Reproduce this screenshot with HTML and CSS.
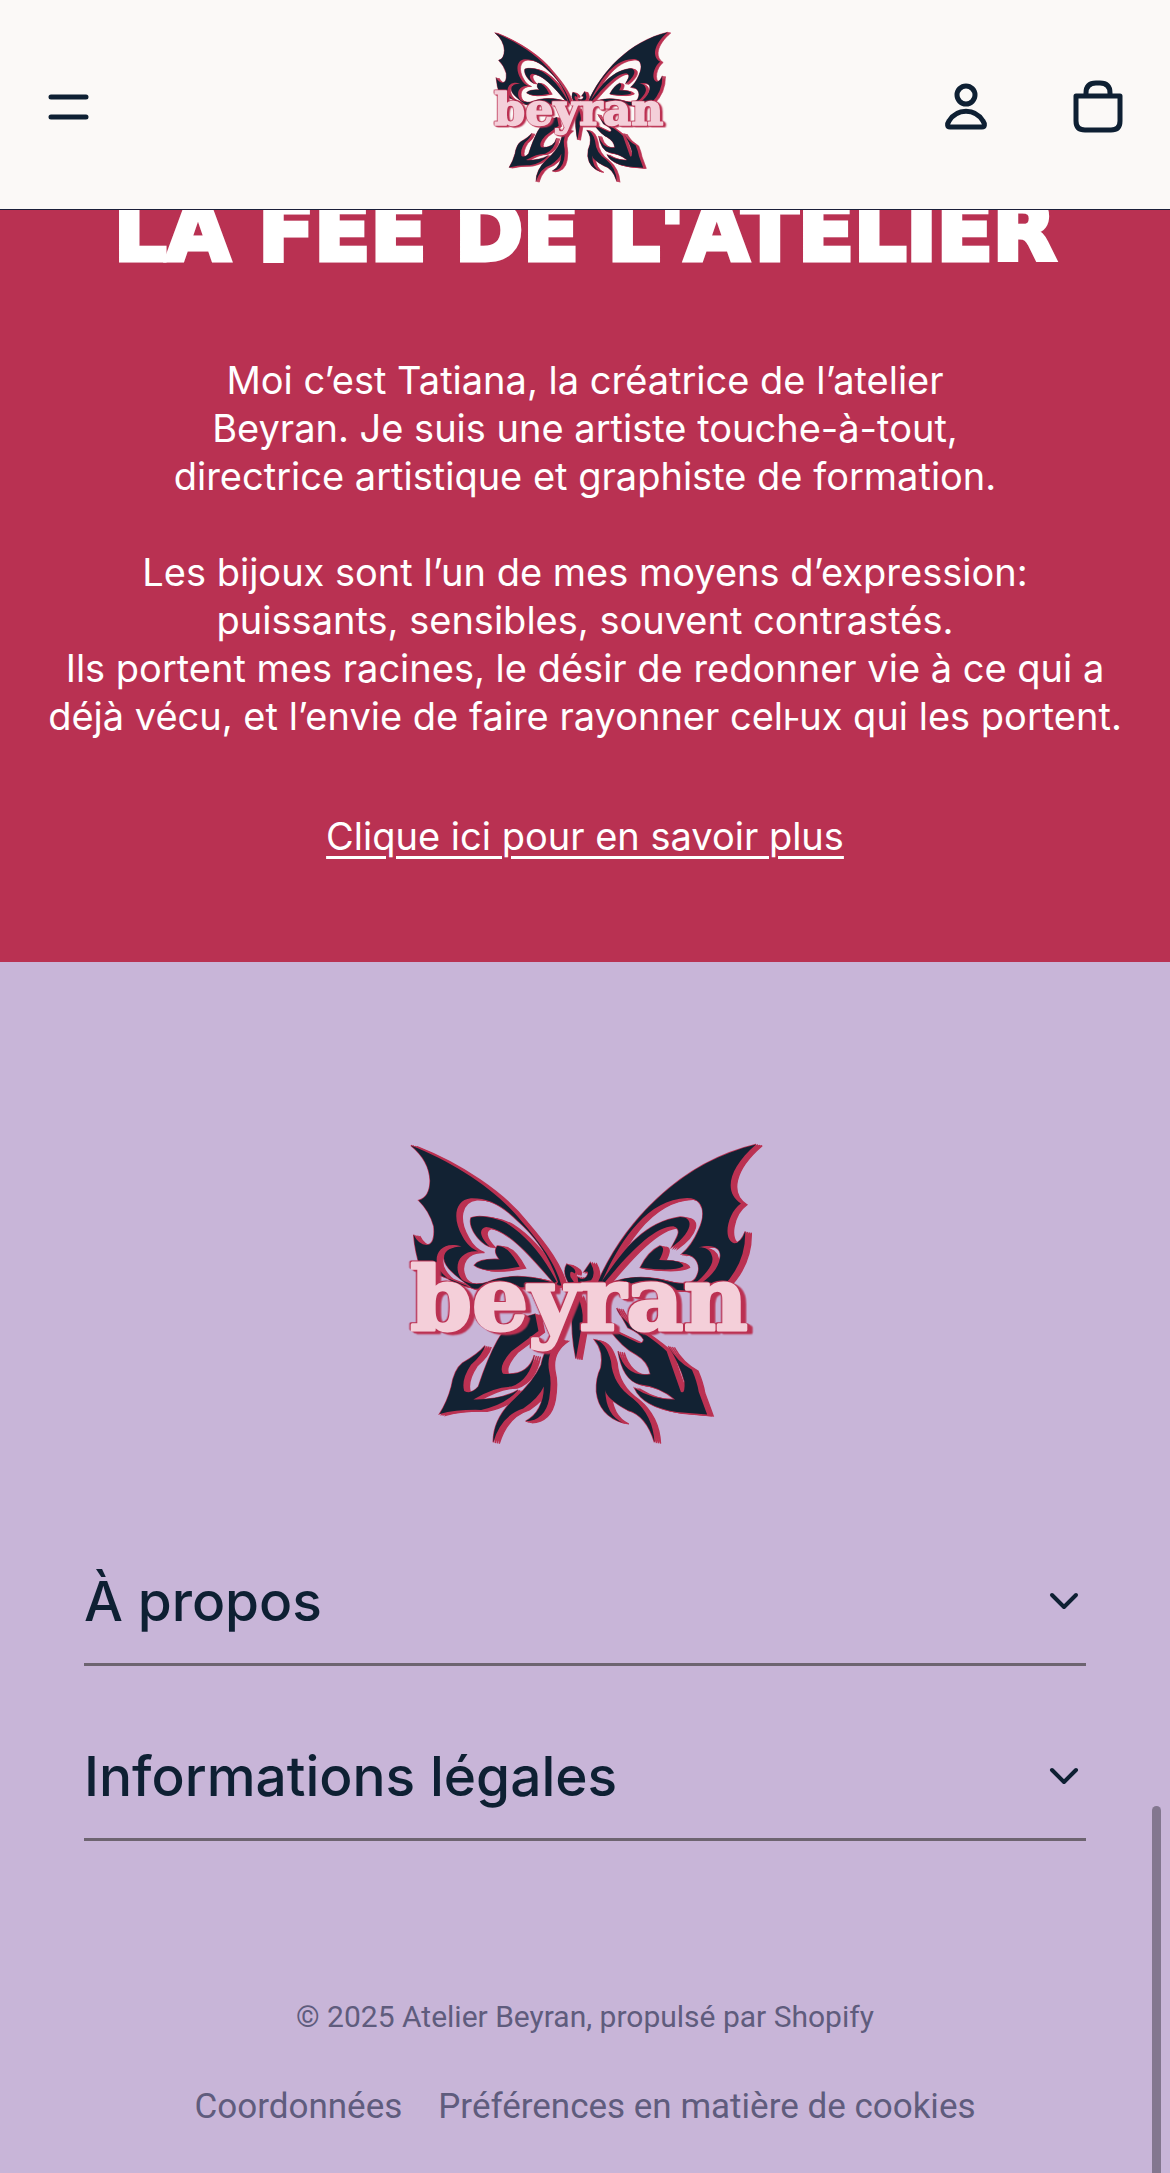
FILE: index.html
```html
<!DOCTYPE html>
<html lang="fr">
<head>
  <meta charset="UTF-8">
  <meta name="viewport" content="width=device-width, initial-scale=1.0">
  <title>Atelier Beyran</title>
  <link rel="stylesheet" href="styles.css">
</head>
<body>
  <!-- Butterfly shape, shared by header and footer logos -->
  <svg class="sprite" aria-hidden="true">
    <defs>
      <g id="butterfly" fill-rule="evenodd">
        <!-- upper wings -->
        <path d="M62 50C190 100 320 185 390 275C450 345 490 400 508 465L420 470L250 475L90 412Q75 370 70 315Q85 345 108 345Q135 345 130 290Q118 245 85 213Q118 205 119 155Q117 95 62 50ZM498 455C470 370 420 310 380 275C330 225 290 206 240 207C190 212 185 270 215 320C228 345 245 358 262 364C210 360 190 400 205 435C215 462 260 466 290 455C350 430 430 435 494 462ZM212 350C150 330 125 380 145 415C165 450 205 465 240 470C200 440 162 412 160 385C160 358 185 352 212 350Z"/>
        <path d="M1085 47C1000 120 990 190 1040 222C1000 250 985 330 1020 340Q1040 340 1053 305Q1055 400 985 470L880 480L612 465C690 280 860 100 1085 47ZM625 460C670 360 750 210 880 206C935 205 935 260 915 300C900 335 885 355 865 372C910 370 925 410 908 440C895 468 850 462 800 447C740 435 690 440 635 465ZM915 352C960 340 985 355 978 385C970 430 920 465 880 480C930 440 962 405 955 380C950 358 935 352 915 352Z"/>
        <path d="M494 454C450 370 400 315 345 280C310 262 260 255 240 265C232 290 260 335 295 350C265 320 262 298 285 292C350 300 410 370 486 458Z"/>
        <path d="M620 464C680 380 740 280 860 262C905 262 895 310 835 352C848 325 870 300 840 290C780 290 700 380 630 464Z"/>
        <path d="M318 348Q350 345 384 410Q280 430 250 405Q265 385 325 388Q305 365 318 348Z"/>
        <path d="M800 348Q820 350 798 390Q865 390 870 408Q840 425 742 412Q765 365 800 348Z"/>
        <!-- antennae and body -->
        <path d="M524 402Q555 415 548 430Q530 415 535 440L545 455L530 458Q510 425 524 402ZM594 397Q612 430 596 450Q575 450 560 468L556 440Q570 452 582 440Q595 420 575 425Z"/>
        <path d="M556 495Q574 540 571 570L551 682Q536 610 540 530Z"/>
        <!-- lower wings -->
        <path d="M430 550Q350 570 318 630Q290 680 262 765Q240 790 220 778Q210 745 240 700Q275 670 282 644Q260 670 215 695Q190 715 182 765Q170 810 147 846Q200 832 270 834Q340 820 380 775Q330 805 247 803Q310 765 360 765Q415 745 428 672Q410 735 335 727Q320 705 360 660L440 600Z"/>
        <path d="M510 627Q465 625 448 700Q425 750 370 800Q305 860 306 930Q330 850 395 830Q440 800 456 765Q455 840 402 868Q460 865 472 800Q480 750 472 720Q460 660 510 627Z"/>
        <path d="M672 532Q685 570 750 605Q800 640 820 660L862 780Q875 790 873 750Q860 700 825 645Q850 690 895 715Q910 750 915 780Q930 820 940 848L850 840Q750 825 725 770Q780 805 845 803Q800 765 740 758Q690 745 676 660Q700 740 772 728Q765 690 730 670Q690 650 650 595L735 635Q750 640 752 625Q740 605 705 590Z"/>
        <path d="M606 626Q640 630 655 690Q660 760 720 800Q780 850 784 930Q760 850 705 835Q640 800 638 775Q640 850 690 872Q620 850 612 780Q610 740 625 710Q635 660 606 626Z"/>
      </g>
      <!-- the same shape pushed out to the right for the red relief -->
      <g id="relief">
        <use href="#butterfly"/>
        <use href="#butterfly" x="6" y="2"/>
        <use href="#butterfly" x="12" y="3"/>
        <use href="#butterfly" x="18" y="4"/>
      </g>
    </defs>
  </svg>

  <header class="header">
    <button class="icon-btn" aria-label="Menu">
      <svg width="48" height="42" viewBox="0 0 48 42"><path d="M7 11H42M7 31H42"/></svg>
    </button>
    <a class="header-logo" href="#" aria-label="Atelier Beyran">
      <svg class="logo" viewBox="46 34 1064 910">
        <use class="logo-relief" href="#relief"/>
        <use class="logo-wings" href="#butterfly"/>
        <text class="logo-text" x="60" y="598">beyran</text>
      </svg>
    </a>
    <div class="header-actions">
      <a class="icon-btn" href="#" aria-label="Connexion">
        <svg width="48" height="56" viewBox="0 0 48 56"><circle cx="24" cy="16" r="9"/><path d="M8 48C5 48 5 45 7 42C15 29 33 29 41 42C43 45 43 48 40 48Z"/></svg>
      </a>
      <a class="icon-btn" href="#" aria-label="Panier">
        <svg width="56" height="56" viewBox="0 0 56 56"><path d="M6 17H50V42Q50 51 41 51H15Q6 51 6 42ZM16 17V14Q16 4 26 4H30Q40 4 40 14V17"/></svg>
      </a>
    </div>
  </header>

  <main class="about">
    <h2>LA FEE DE L'ATELIER</h2>
    <p>
      Moi c’est Tatiana, la créatrice de l’atelier<br>
      Beyran. Je suis une artiste touche-à-tout,<br>
      directrice artistique et graphiste de formation.
    </p>
    <p>
      Les bijoux sont l’un de mes moyens d’expression:<br>
      puissants, sensibles, souvent contrastés.<br>
      Ils portent mes racines, le désir de redonner vie à ce qui a<br>
      déjà vécu, et l’envie de faire rayonner celⱶux qui les portent.
    </p>
    <a class="about-link" href="#">Clique ici pour en savoir plus</a>
  </main>

  <footer class="footer">
    <svg class="logo" viewBox="46 34 1064 910" role="img" aria-label="Beyran">
      <use class="logo-relief" href="#relief"/>
      <use class="logo-wings" href="#butterfly"/>
      <text class="logo-text" x="60" y="598">beyran</text>
    </svg>

    <div class="menus">
      <button class="menu-toggle" aria-expanded="false">
        <span>À propos</span>
        <svg width="32" height="24" viewBox="0 0 32 24"><path d="M4 6L16 18L28 6"/></svg>
      </button>
      <button class="menu-toggle" aria-expanded="false">
        <span>Informations légales</span>
        <svg width="32" height="24" viewBox="0 0 32 24"><path d="M4 6L16 18L28 6"/></svg>
      </button>
    </div>

    <p class="copyright">© 2025 Atelier Beyran, propulsé par Shopify</p>
    <nav class="policies">
      <a href="#">Coordonnées</a>
      <a href="#">Préférences en matière de cookies</a>
    </nav>
  </footer>

  <div class="scroll-thumb"></div>
</body>
</html>
```
FILE: styles.css
```css
* {
  margin: 0;
  padding: 0;
  box-sizing: border-box;
}

body {
  font-family: Inter, "Liberation Sans", sans-serif;
  background: #c8b5d8;
  color: #0e2033;
}

a {
  color: inherit;
  text-decoration: none;
}

button {
  font: inherit;
  color: inherit;
  background: none;
  border: none;
  cursor: pointer;
}

.sprite {
  position: absolute;
  width: 0;
  height: 0;
}

/* Header */
.header {
  position: sticky;
  top: 0;
  z-index: 10;
  display: grid;
  grid-template-columns: 1fr auto 1fr;
  align-items: center;
  height: 210px;
  padding: 5px 44px 0;
  background: #fbf9f7;
  border-bottom: 1px solid #1b1f3a;
}

.header-logo {
  margin-right: 6px;
}

.header-logo .logo {
  width: 180px;
  height: 154px;
}

.header-actions {
  display: flex;
  justify-content: flex-end;
  gap: 80px;
}

.icon-btn {
  display: flex;
  align-items: center;
}

.icon-btn svg {
  fill: none;
  stroke: #0e2033;
  stroke-width: 5;
  stroke-linejoin: round;
  stroke-linecap: round;
}

/* Logo */
.logo {
  display: block;
  width: 360px;
  height: 307px;
}

.logo-relief {
  fill: #bb3152;
  stroke: #bb3152;
  stroke-width: 4;
}

.logo-wings {
  fill: #122233;
}

.logo-text {
  font-family: "DejaVu Serif", serif;
  font-size: 262px;
  font-weight: 700;
  fill: #f4cfd9;
  stroke: #f4cfd9;
  stroke-width: 9;
  stroke-linejoin: round;
  filter: drop-shadow(-4px -3px 0 #bb3152) drop-shadow(8px 4px 0 #bb3152) drop-shadow(8px 4px 0 #bb3152);
}

/* About */
.about {
  display: flex;
  flex-direction: column;
  align-items: center;
  padding: 0 40px 102px;
  background: #b93152;
  color: #fff;
  font-size: 38px;
  line-height: 48px;
  text-align: center;
}

.about h2 {
  margin: -26px 0 76px;
  font-family: "DejaVu Sans", sans-serif;
  font-size: 82px;
  font-weight: 700;
  line-height: 96px;
  white-space: nowrap;
  -webkit-text-stroke: 5px #fff;
}

.about p {
  margin-bottom: 48px;
  white-space: nowrap;
}

.about-link {
  margin-top: 24px;
  text-decoration: underline;
  text-decoration-thickness: 3px;
  text-underline-offset: 6px;
}

/* Footer */
.footer {
  display: flex;
  flex-direction: column;
  align-items: center;
  padding: 178px 84px 40px;
}

.menus {
  align-self: stretch;
  margin: 44px 0 152px;
}

.menu-toggle {
  display: flex;
  align-items: center;
  justify-content: space-between;
  width: 100%;
  height: 175px;
  padding-top: 48px;
  border-bottom: 3px solid #6d6470;
  font-size: 55px;
  font-weight: 500;
}

.menu-toggle svg {
  margin-right: 6px;
  fill: none;
  stroke: #0e2033;
  stroke-width: 4;
  stroke-linecap: round;
  stroke-linejoin: round;
}

.copyright,
.policies {
  color: #5f5c7d;
  font-family: Roboto, sans-serif;
  line-height: 48px;
}

.copyright {
  font-size: 30px;
}

.policies {
  display: flex;
  gap: 36px;
  margin-top: 42px;
  font-size: 35px;
  white-space: nowrap;
}

.scroll-thumb {
  position: fixed;
  right: 9px;
  bottom: 0;
  width: 9px;
  height: 367px;
  border-radius: 5px 5px 0 0;
  background: #83778f;
}
```
